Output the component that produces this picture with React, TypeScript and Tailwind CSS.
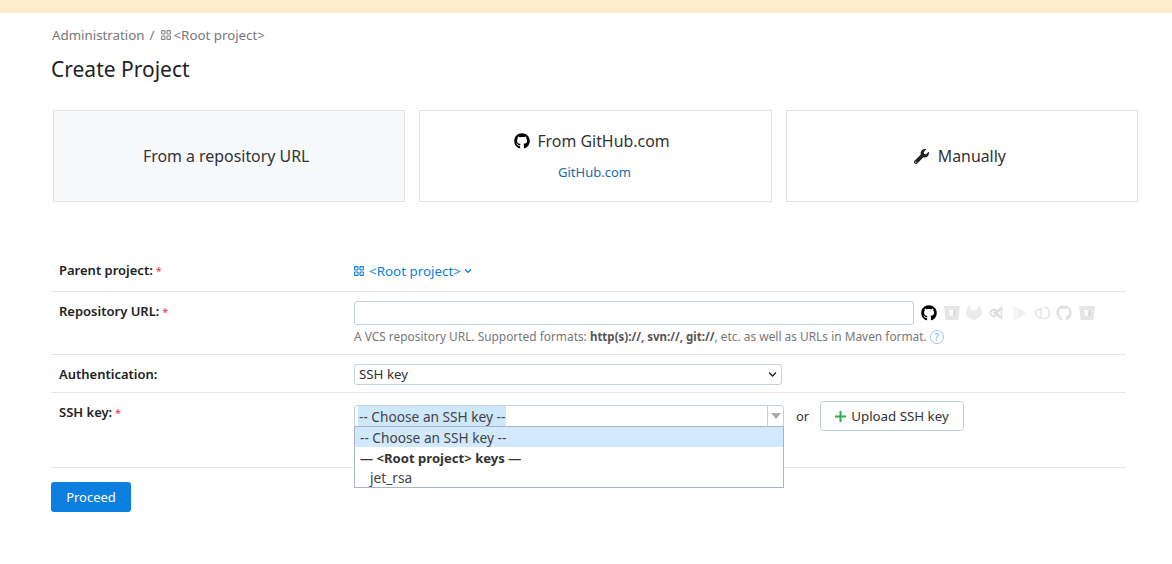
import { FaGithub, FaWrench, FaChevronDown } from "react-icons/fa";
import { SiGitlab } from "react-icons/si";

function ProjectIcon({ className }: { className: string }) {
  return (
    <svg viewBox="0 0 10 10" className={className} fill="none" stroke="currentColor" strokeWidth="1.1">
      <rect x="0.6" y="0.6" width="3.4" height="3.4" rx="0.5" />
      <rect x="6" y="0.6" width="3.4" height="3.4" rx="0.5" />
      <rect x="0.6" y="6" width="3.4" height="3.4" rx="0.5" />
      <rect x="6" y="6" width="3.4" height="3.4" rx="0.5" />
    </svg>
  );
}

function BitbucketIcon() {
  return (
    <svg viewBox="0 0 16 16" className="w-4 h-4">
      <path d="M0 1h16l-1.6 14H1.6z" fill="#e6e6e6" />
      <path d="M5 5h7l-.6 6H6z" fill="#fbfbfb" />
      <path d="M9.5 5H12l-.6 6H9z" fill="#d8d8d8" />
    </svg>
  );
}

function HostIcons() {
  return (
    <div className="flex items-center gap-[6.5px] ml-[7px] h-6">
      <FaGithub className="w-4 h-4 text-black" />
      <BitbucketIcon />
      <SiGitlab className="w-4 h-4 text-[#ebebeb]" />
      <svg viewBox="0 0 16 16" className="w-4 h-4" fill="none" stroke="#dedede" strokeWidth="1.6">
        <path d="M12.5 2.5v11L5 8zM12.5 2.5 5 12 1.5 9.5v-3L5 4l7.5 9.5" />
      </svg>
      <svg viewBox="0 0 16 16" className="w-4 h-4">
        <path d="M2 1c4 .5 9 4 12.500 7-3.500 3-8.500 6.500-12.500 7 2-4.500 2-9.500 0-14z" fill="#efefef" />
        <path d="M2 1c2 4.500 2 9.500 0 14 1.500-.2 3-.8 4.500-1.500 1-3.500 1-7.500 0-11C5 1.800 3.500 1.200 2 1z" fill="#f7f7f7" />
      </svg>
      <svg viewBox="0 0 16 16" className="w-4 h-4" fill="none" stroke="#e6e6e6" strokeWidth="1.6">
        <path d="M10 2.500h2.500L15 5v6l-2.500 2.500H7L1.500 10V6L7 3.500v9" />
      </svg>
      <FaGithub className="w-4 h-4 text-[#e2e2e2]" />
      <BitbucketIcon />
    </div>
  );
}

function Row({ label, required, children, className }: { label: string; required?: boolean; children: React.ReactNode; className: string }) {
  return (
    <div className={`flex border-b border-[#e3e6eb] ${className}`}>
      <div className="w-[303px] pl-2 font-semibold text-[#222]">
        {label}
        {required && <span className="text-[11px] font-normal text-[#dc3545]"> *</span>}
      </div>
      <div className="flex-1">{children}</div>
    </div>
  );
}

export default function App() {
  return (
    <div className="min-h-screen bg-white text-[#333] text-[13px] leading-5 font-['Noto_Sans',sans-serif]">
      <div className="h-[13px] bg-[#fcebcd]" />
      <div className="pl-[51px] pr-[46px]">
        <div className="flex items-center h-5 mt-3 pl-px text-[13.3px] text-[#777]">
          <span>Administration</span>
          <span className="ml-[5px] mr-[6px]">/</span>
          <ProjectIcon className="w-[10px] h-[10px] mr-[3px] text-[#888]" />
          <span>&lt;Root project&gt;</span>
        </div>
        <h1 className="mt-[10px] h-7 text-[21px] leading-7 text-[#222]">Create Project</h1>

        <div className="grid grid-cols-3 gap-[14px] ml-[2px] -mr-3 mt-[27px] h-[92px] text-[15.9px] text-[#333]">
          <div className="flex items-center justify-center border border-[#dfe3e8] bg-[#f6f8fa] pr-[6px]">From a repository URL</div>
          <div className="flex flex-col items-center justify-center border border-[#dfe3e8] pt-[2px]">
            <div className="flex items-center gap-[7px] -mt-[2px] pr-[7px]">
              <FaGithub className="w-4 h-4 text-black" />
              From GitHub.com
            </div>
            <div className="mt-[11px] pr-[2px] text-[13px] text-[#1b6aa8]">GitHub.com</div>
          </div>
          <div className="flex items-center justify-center gap-[9px] border border-[#dfe3e8] pr-[4px]">
            <FaWrench className="w-[15px] h-[15px] text-[#222]" />
            Manually
          </div>
        </div>

        <div className="mt-[48px]">
          <Row label="Parent project:" required className="h-[42px] pt-[10px]">
            <div className="flex items-center h-5 mt-px text-[13.4px] text-[#0b7fe0]">
              <ProjectIcon className="w-[10px] h-[10px] mr-[5px]" />
              &lt;Root project&gt;
              <FaChevronDown className="w-2 h-2 ml-[3px]" />
            </div>
          </Row>

          <Row label="Repository URL:" required className="h-[63px] pt-[9px]">
            <div className="flex items-center">
              <div className="w-[560px] h-6 border border-[#c4d0df] rounded-[3px]" />
              <HostIcons />
            </div>
            <div className="flex items-center mt-px text-[11.9px] text-[#777]">
              <span>
                A VCS repository URL. Supported formats: <b className="text-[11.5px] text-[#555]">http(s)://, svn://, git://</b>, etc. as well as URLs in Maven format.
              </span>
              <span className="flex items-center justify-center w-[14px] h-[14px] ml-[3px] rounded-full border border-[#9cc8ec] text-[10px] text-[#6fb0e6]">?</span>
            </div>
          </Row>

          <Row label="Authentication:" className="h-[38px] pt-[9px]">
            <div className="flex items-center justify-between w-[428px] h-[21px] pl-1 pr-[4px] pb-[1px] border border-[#c4d0df] rounded-[3px] text-[13.3px]">
              SSH key
              <FaChevronDown className="w-[9px] h-[9px] text-[#222]" />
            </div>
          </Row>

          <Row label="SSH key:" required className="h-[75px] pt-[9px]">
            <div className="flex items-start">
              <div className="relative w-[430px] mt-[3px] text-[13.7px]">
                <div className="flex items-center justify-between h-[22px] pl-[3px] border border-[#c4d0df] rounded-[3px]">
                  <span className="bg-[#cfe7fb] text-[#444] h-[21px] px-px pt-px">-- Choose an SSH key --</span>
                  <span className="flex items-center justify-center w-4 h-full border-l border-[#c4d0df]">
                    <span className="border-x-[5px] border-t-[6px] border-x-transparent border-t-[#aaa]" />
                  </span>
                </div>
                <div className="absolute left-0 top-[21px] w-full h-[62px] border border-[#aab4c8] bg-white text-[#444]">
                  <div className="h-5 pl-[5px] pt-px bg-[#d2e9fd]">-- Choose an SSH key --</div>
                  <div className="h-5 pl-[5px] pt-px text-[13.1px] font-bold text-[#333]">— &lt;Root project&gt; keys —</div>
                  <div className="h-5 pl-[15px] pt-px">jet_rsa</div>
                </div>
              </div>
              <span className="ml-3 mt-[4px]">or</span>
              <div className="flex items-center h-[30px] ml-[11px] -mt-px pl-[14px] pr-[14px] border border-[#c4d0df] rounded-[3px] text-[13.3px]">
                <svg viewBox="0 0 11 11" className="w-[11px] h-[11px] mr-[5px]" fill="none" stroke="#2eaa4f" strokeWidth="2">
                  <path d="M5.500 0v11M0 5.500h11" />
                </svg>
                Upload SSH key
              </div>
            </div>
          </Row>
        </div>

        <div className="flex items-center justify-center mt-[14px] w-20 h-[30px] rounded-[3px] bg-[#0b7fe0] text-white">Proceed</div>
      </div>
    </div>
  );
}
